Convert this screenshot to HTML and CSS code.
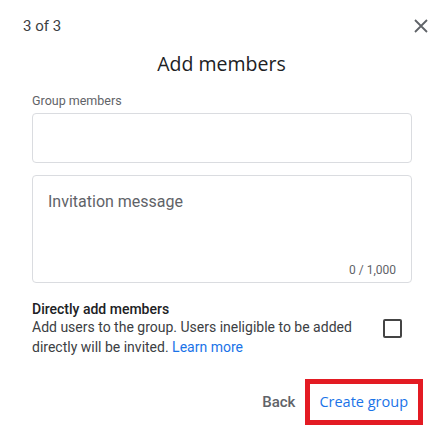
FILE: index.html
```html
<!DOCTYPE html>
<html lang="en">
<head>
    <meta charset="UTF-8">
    <meta name="viewport" content="width=device-width, initial-scale=1.0">
    <title>Add members</title>
    <link rel="stylesheet" href="styles.css">
</head>
<body>
    <div class="dialog">
        <div class="topbar">
            <span class="step">3 of 3</span>
            <button class="close" aria-label="Close">
                <svg width="14" height="14" viewBox="0 0 14 14">
                    <path d="M1 1 L13 13 M13 1 L1 13" stroke="#5f6368" stroke-width="1.8" fill="none"/>
                </svg>
            </button>
        </div>

        <h2 class="title">Add members</h2>

        <div class="content">
            <label class="field-label">Group members</label>
            <div class="members-box"></div>

            <div class="message-box">
                <span class="placeholder">Invitation message</span>
                <span class="counter">0 / 1,000</span>
            </div>

            <div class="direct">
                <div class="direct-text">
                    <div class="direct-title">Directly add members</div>
                    <p>Add users to the group. Users ineligible to be added directly will be invited. <a href="#">Learn more</a></p>
                </div>
                <span class="checkbox"></span>
            </div>

            <div class="actions">
                <button class="btn-back">Back</button>
                <button class="btn-create">Create group</button>
            </div>
        </div>
    </div>
</body>
</html>
```

FILE: styles.css
```css
body {
    margin: 0;
    font-family: Roboto, Arial, sans-serif;
    background-color: #fff;
    color: #3c4043;
}

.dialog {
    width: 447px;
    height: 444px;
}

.topbar {
    display: flex;
    justify-content: space-between;
    align-items: center;
    padding: 17px 19px 0 23px;
}

.step {
    font-size: 15px;
    color: #3c4043;
}

.close {
    border: none;
    background: none;
    padding: 0;
    width: 14px;
    height: 14px;
    cursor: pointer;
}

.title {
    margin: 15px 4px 0 0;
    text-align: center;
    font-family: "Open Sans", Roboto, sans-serif;
    font-size: 19.5px;
    font-weight: 500;
    color: #202124;
}

.content {
    padding: 0 35px 0 32px;
}

.field-label {
    display: block;
    margin-top: 16px;
    font-size: 12.5px;
    color: #5f6368;
}

.members-box {
    margin-top: 5px;
    height: 48px;
    border: 1px solid #dadce0;
    border-radius: 4px;
}

.message-box {
    margin-top: 12px;
    height: 108px;
    border: 1px solid #dadce0;
    border-radius: 4px;
    display: flex;
    flex-direction: column;
    justify-content: space-between;
    padding: 16px 15px 5px 15px;
    box-sizing: border-box;
}

.placeholder {
    font-size: 16px;
    color: #5f6368;
}

.counter {
    align-self: flex-end;
    font-size: 12px;
    color: #5f6368;
}

.direct {
    display: flex;
    justify-content: space-between;
    margin-top: 18px;
}

.direct-text {
    width: 340px;
}

.direct-title {
    font-size: 14px;
    font-weight: 500;
    color: #202124;
}

.direct-text p {
    margin: 0;
    font-size: 14px;
    line-height: 20px;
    color: #3c4043;
}

.direct-text a {
    color: #1a73e8;
    text-decoration: none;
}

.checkbox {
    margin: 18px 10px 0 0;
    width: 15px;
    height: 15px;
    border: 2px solid #444;
    border-radius: 2px;
}

.actions {
    display: flex;
    justify-content: flex-end;
    align-items: center;
    gap: 10px;
    margin-top: 22px;
    margin-right: -11px;
}

.btn-back {
    border: none;
    background: none;
    font-family: Roboto, sans-serif;
    font-size: 15px;
    font-weight: 500;
    color: #5f6368;
    padding: 0;
}

.btn-create {
    border: 5px solid #e31b23;
    background: #fff;
    font-family: "Open Sans", Roboto, sans-serif;
    font-size: 14.5px;
    font-weight: 500;
    line-height: 20px;
    color: #1a73e8;
    padding: 8px 10px 8px 9px;
}
```
